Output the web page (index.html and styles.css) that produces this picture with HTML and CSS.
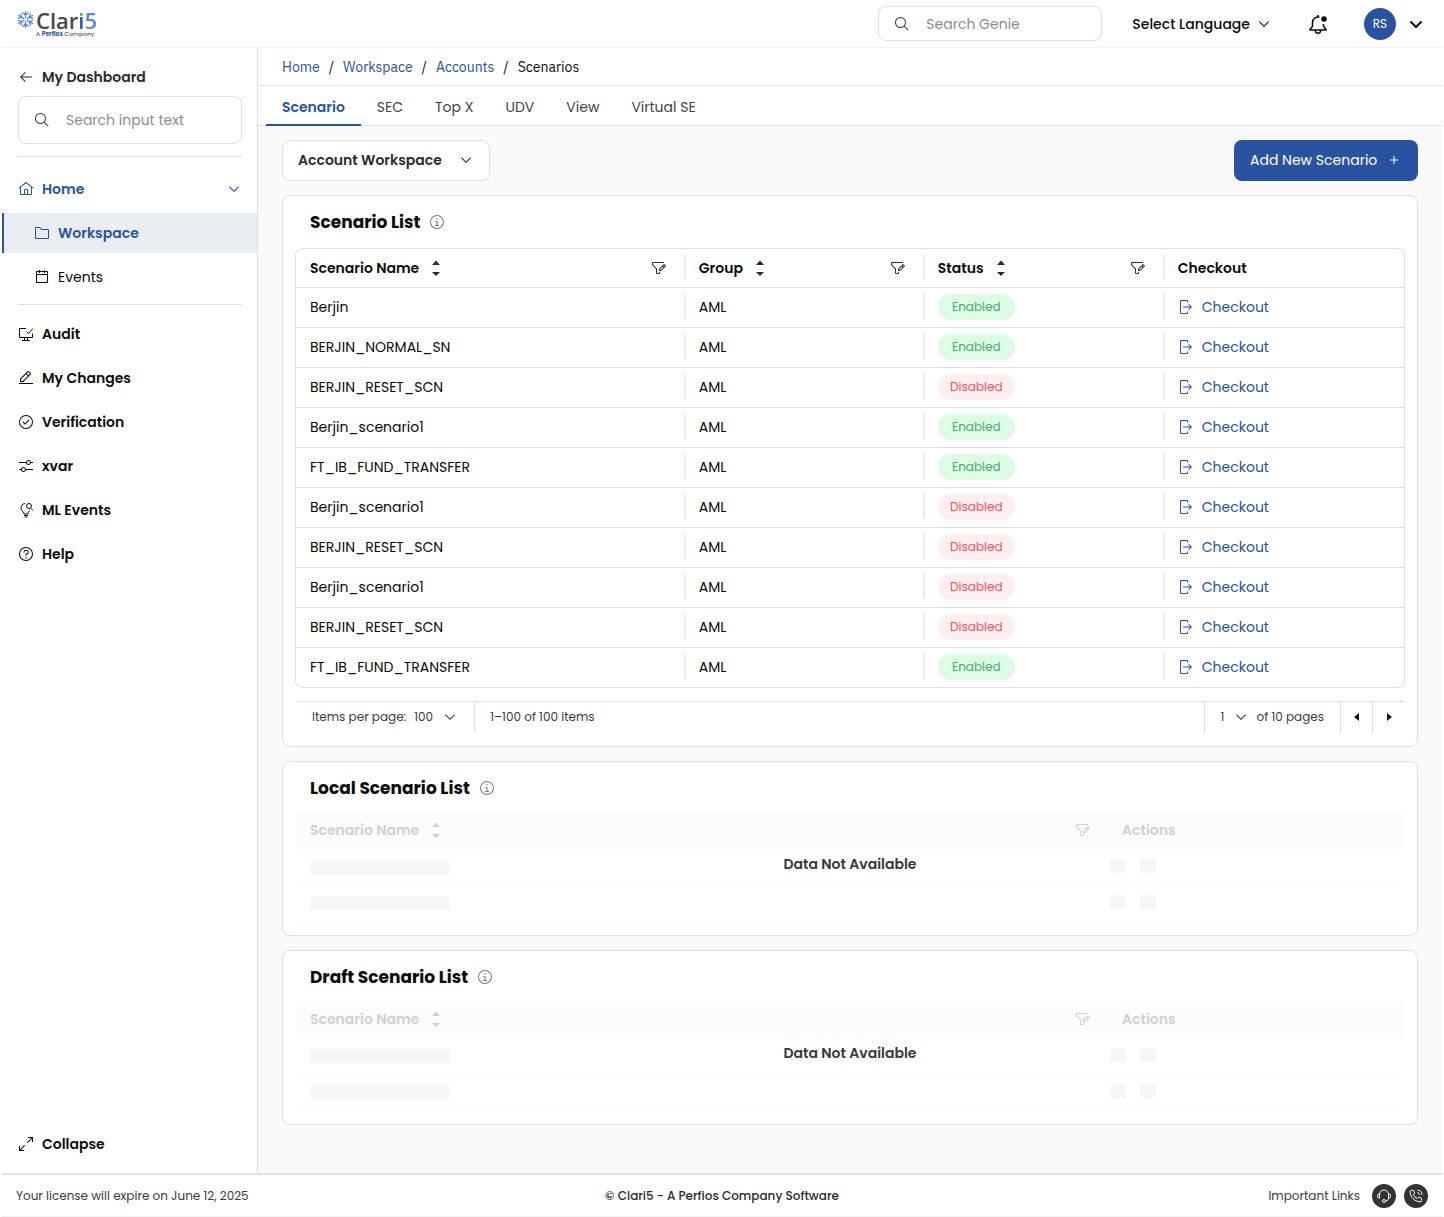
FILE: index.html
```html
<!DOCTYPE html>
<html lang="en">
<head>
<meta charset="utf-8">
<meta name="viewport" content="width=device-width, initial-scale=1">
<title>Clari5 – Scenarios</title>
<link rel="stylesheet" href="styles.css">
</head>
<body>
<svg class="sprite" aria-hidden="true">
  <symbol id="i-back" viewBox="0 0 32 32"><path d="M14 26l1.41-1.41L7.83 17H28v-2H7.83l7.58-7.59L14 6 4 16z"/></symbol>
  <symbol id="i-search" viewBox="0 0 32 32"><path d="M29 27.586l-7.552-7.552a11.018 11.018 0 1 0-1.414 1.414L27.586 29ZM4 13a9 9 0 1 1 9 9 9.01 9.01 0 0 1-9-9Z"/></symbol>
  <symbol id="i-home" viewBox="0 0 32 32"><path d="M16.612 2.214a1.01 1.01 0 0 0-1.242 0L1 13.419l1.243 1.572L4 13.621V26a2.004 2.004 0 0 0 2 2h20a2.004 2.004 0 0 0 2-2V13.63l1.757 1.37L31 13.428ZM18 26h-4v-8h4Zm2 0v-8a2.002 2.002 0 0 0-2-2h-4a2.002 2.002 0 0 0-2 2v8H6V12.062l10-7.79 10 7.8V26Z"/></symbol>
  <symbol id="i-down" viewBox="0 0 32 32"><path d="M16 22 6 12l1.4-1.4 8.6 8.6 8.6-8.6L26 12z"/></symbol>
  <symbol id="i-folder" viewBox="0 0 32 32"><path d="M11.17 6l3.42 3.41.58.59H28v16H4V6h7.17m0-2H4a2 2 0 0 0-2 2v20a2 2 0 0 0 2 2h24a2 2 0 0 0 2-2V10a2 2 0 0 0-2-2H16l-3.41-3.41A2 2 0 0 0 11.17 4z"/></symbol>
  <symbol id="i-calendar" viewBox="0 0 32 32"><path d="M26 4h-4V2h-2v2h-8V2h-2v2H6c-1.1 0-2 .9-2 2v20c0 1.1.9 2 2 2h20c1.1 0 2-.9 2-2V6c0-1.1-.9-2-2-2zm0 22H6V12h20v14zm0-16H6V6h4v2h2V6h8v2h2V6h4v4z"/></symbol>
  <symbol id="i-audit" viewBox="0 0 32 32"><path d="M16 5H3v18h26v-8M13 23v5m6-5v5M8 29h16M17 11l4 4 9-10" fill="none" stroke="currentColor" stroke-width="2"/></symbol>
  <symbol id="i-edit" viewBox="0 0 32 32"><path d="M2 26h28v2H2zM25.4 9c.8-.8.8-2 0-2.8l-3.6-3.6c-.8-.8-2-.8-2.8 0l-15 15V24h6.4L25.4 9zm-5-5L24 7.6l-3 3L17.4 7l3-3zM6 22v-3.6l10-10 3.6 3.6-10 10H6z"/></symbol>
  <symbol id="i-check" viewBox="0 0 32 32"><path d="M14 21.414l-5-5.001L10.413 15 14 18.586 21.585 11 23 12.415zM16 2a14 14 0 1 0 14 14A14 14 0 0 0 16 2Zm0 26a12 12 0 1 1 12-12 12 12 0 0 1-12 12Z"/></symbol>
  <symbol id="i-adjust" viewBox="0 0 32 32"><path d="M30 8h-4.1c-.5-2.3-2.5-4-4.9-4s-4.4 1.7-4.9 4H2v2h14.1c.5 2.3 2.5 4 4.9 4s4.4-1.7 4.9-4H30V8zm-9 4c-1.7 0-3-1.3-3-3s1.3-3 3-3 3 1.3 3 3-1.3 3-3 3zM2 24h4.1c.5 2.3 2.5 4 4.9 4s4.4-1.7 4.9-4H30v-2H15.9c-.5-2.3-2.5-4-4.9-4s-4.4 1.7-4.9 4H2v2zm9-4c1.7 0 3 1.3 3 3s-1.3 3-3 3-3-1.3-3-3 1.3-3 3-3z"/></symbol>
  <symbol id="i-idea" viewBox="0 0 32 32"><path d="M14 3C9 3.500 6 7 6 12c0 6 5.500 6.500 6 12h8c0-4 2-5.500 4-7.500M12 27h8M13.500 30h5M25.500 12.500 30 17" fill="none" stroke="currentColor" stroke-width="2"/><circle cx="22" cy="8" r="5" fill="none" stroke="currentColor" stroke-width="2"/></symbol>
  <symbol id="i-help" viewBox="0 0 32 32"><path d="M16 2a14 14 0 1 0 14 14A14 14 0 0 0 16 2Zm0 26a12 12 0 1 1 12-12 12 12 0 0 1-12 12ZM17 8h-1.500a4.490 4.490 0 0 0-4.500 4.500v.5h2v-.5A2.500 2.500 0 0 1 15.500 10H17a2.500 2.500 0 0 1 0 5h-2v4.500h2V17a4.500 4.500 0 0 0 0-9Z"/><circle cx="16" cy="23.500" r="1.500"/></symbol>
  <symbol id="i-expand" viewBox="0 0 32 32"><path d="M20 2v2h6.586L18 12.582 19.414 14 28 5.414V12h2V2zM14 19.416 12.592 18 4 26.586V20H2v10h10v-2H5.414z"/></symbol>
  <symbol id="i-info" viewBox="0 0 32 32"><path d="M17 22v-8h-4v2h2v6h-3v2h8v-2zM16 8a1.500 1.500 0 1 0 1.500 1.500A1.500 1.500 0 0 0 16 8ZM16 30a14 14 0 1 1 14-14 14 14 0 0 1-14 14Zm0-26a12 12 0 1 0 12 12A12 12 0 0 0 16 4Z"/></symbol>
  <symbol id="i-filter" viewBox="0 0 32 32"><path d="M26 6H4v3.170l7.410 7.410.590.590V26h4v-2h2v2a2 2 0 0 1-2 2h-4a2 2 0 0 1-2-2v-8L2.590 10.590A2 2 0 0 1 2 9.170V6a2 2 0 0 1 2-2h22z"/><path fill-rule="evenodd" d="M29.710 11.290l-3-3a1 1 0 0 0-1.420 0L16 17.590V22h4.410l9.300-9.290a1 1 0 0 0 0-1.420zM19.590 20H18v-1.590l5-5L24.590 15zM26 13.590 24.410 12 26 10.410 27.590 12z"/></symbol>
  <symbol id="i-sort" viewBox="0 0 16 18"><path d="M4 6l4-4.500L12 6zM4 13h8l-4 4z"/></symbol>
  <symbol id="i-checkout" viewBox="0 0 32 32"><path d="M6 30h12a2 2 0 0 0 2-2v-3h-2v3H6V4h12v3h2V4a2 2 0 0 0-2-2H6a2 2 0 0 0-2 2v24a2 2 0 0 0 2 2ZM20.586 20.586 24.172 17H10v-2h14.172l-3.586-3.586L22 10l6 6-6 6z"/></symbol>
  <symbol id="i-add" viewBox="0 0 32 32"><path d="M17 15V8h-2v7H8v2h7v7h2v-7h7v-2z"/></symbol>
  <symbol id="i-left" viewBox="0 0 32 32"><path d="M20 24 10 16 20 8z"/></symbol>
  <symbol id="i-right" viewBox="0 0 32 32"><path d="M12 8l10 8-10 8z"/></symbol>
</svg>

<header class="topbar">
  <a class="logo" href="#" aria-label="Clari5, a Perfios company">
    <svg class="logo-mark" viewBox="0 0 20 20" width="19" height="19" aria-hidden="true">
      <g fill="none" stroke="#5b8bc9" stroke-width="1.400" stroke-linecap="round">
        <path id="arm" d="M10 8V1.500M10 5.500 7.300 2.800M10 5.500l2.700-2.700"/>
        <use href="#arm" transform="rotate(60 10 10)"/><use href="#arm" transform="rotate(120 10 10)"/>
        <use href="#arm" transform="rotate(180 10 10)"/><use href="#arm" transform="rotate(240 10 10)"/>
        <use href="#arm" transform="rotate(300 10 10)"/>
      </g>
    </svg>
    <span class="logo-text">
      <span class="logo-name">Clar<span class="logo-i">i</span><span class="logo-5">5</span></span>
      <span class="logo-tag">A <b>Perfios</b> Company</span>
    </span>
  </a>
  <label class="search search-top">
    <svg class="icon"><use href="#i-search"/></svg>
    <input type="search" placeholder="Search Genie" aria-label="Search Genie">
  </label>
  <button class="language" type="button">Select Language <svg class="icon"><use href="#i-down"/></svg></button>
  <button class="bell" type="button" aria-label="Notifications">
    <svg viewBox="0 0 20 20" width="20" height="20"><path d="M11.500 3.300A5.500 5.500 0 0 0 4.500 8.500v4L2 15.200V16h16v-.8l-2.500-2.700V10M10 1v2M7.300 16.500a2.700 2.700 0 0 0 5.400 0" fill="none" stroke="currentColor" stroke-width="1.500"/><circle cx="16" cy="5" r="2.800"/></svg>
  </button>
  <button class="account" type="button" aria-label="Account menu">
    <span class="avatar">RS</span>
    <svg viewBox="0 0 16 16" width="16" height="16"><path d="M2.500 5.500 8 11l5.500-5.500" fill="none" stroke="currentColor" stroke-width="2"/></svg>
  </button>
</header>

<div class="shell">
  <aside class="sidebar">
    <a class="nav-link back" href="#"><svg class="icon"><use href="#i-back"/></svg>My Dashboard</a>
    <label class="search search-side">
      <svg class="icon"><use href="#i-search"/></svg>
      <input type="search" placeholder="Search input text" aria-label="Search input text">
    </label>
    <nav class="nav" aria-label="Main">
      <a class="nav-link open" href="#"><svg class="icon"><use href="#i-home"/></svg>Home<svg class="icon nav-chevron"><use href="#i-down"/></svg></a>
      <a class="nav-link sub active" href="#"><svg class="icon"><use href="#i-folder"/></svg>Workspace</a>
      <a class="nav-link sub" href="#"><svg class="icon"><use href="#i-calendar"/></svg>Events</a>
      <hr>
      <a class="nav-link" href="#"><svg class="icon"><use href="#i-audit"/></svg>Audit</a>
      <a class="nav-link" href="#"><svg class="icon"><use href="#i-edit"/></svg>My Changes</a>
      <a class="nav-link" href="#"><svg class="icon"><use href="#i-check"/></svg>Verification</a>
      <a class="nav-link" href="#"><svg class="icon"><use href="#i-adjust"/></svg>xvar</a>
      <a class="nav-link" href="#"><svg class="icon"><use href="#i-idea"/></svg>ML Events</a>
      <a class="nav-link" href="#"><svg class="icon"><use href="#i-help"/></svg>Help</a>
    </nav>
    <button class="nav-link collapse" type="button"><svg class="icon"><use href="#i-expand"/></svg>Collapse</button>
  </aside>

  <main class="main">
    <nav class="crumbs" aria-label="Breadcrumb">
      <a href="#">Home</a><span>/</span><a href="#">Workspace</a><span>/</span><a href="#">Accounts</a><span>/</span><span>Scenarios</span>
    </nav>
    <nav class="tabs" aria-label="Sections">
      <a class="tab current" href="#">Scenario</a>
      <a class="tab" href="#">SEC</a>
      <a class="tab" href="#">Top X</a>
      <a class="tab" href="#">UDV</a>
      <a class="tab" href="#">View</a>
      <a class="tab" href="#">Virtual SE</a>
    </nav>

    <div class="content">
      <div class="toolbar">
        <span class="select workspace">
          <select aria-label="Workspace"><option>Account Workspace</option></select>
          <svg class="icon"><use href="#i-down"/></svg>
        </span>
        <button class="primary" type="button">Add New Scenario <svg class="icon"><use href="#i-add"/></svg></button>
      </div>

      <section class="card">
        <h2 class="card-title">Scenario List <svg class="icon"><use href="#i-info"/></svg></h2>
        <div class="table-frame">
          <table class="grid">
            <colgroup><col class="c-name"><col class="c-group"><col class="c-status"><col></colgroup>
            <thead><tr>
              <th><div class="head">Scenario Name <svg class="sort"><use href="#i-sort"/></svg><svg class="icon filter"><use href="#i-filter"/></svg></div></th>
              <th><div class="head">Group <svg class="sort"><use href="#i-sort"/></svg><svg class="icon filter"><use href="#i-filter"/></svg></div></th>
              <th><div class="head">Status <svg class="sort"><use href="#i-sort"/></svg><svg class="icon filter"><use href="#i-filter"/></svg></div></th>
              <th><div class="head">Checkout</div></th>
            </tr></thead>
            <tbody>
              <tr><td>Berjin</td><td>AML</td><td><span class="badge on">Enabled</span></td><td><a class="checkout" href="#"><svg class="icon"><use href="#i-checkout"/></svg>Checkout</a></td></tr>
              <tr><td>BERJIN_NORMAL_SN</td><td>AML</td><td><span class="badge on">Enabled</span></td><td><a class="checkout" href="#"><svg class="icon"><use href="#i-checkout"/></svg>Checkout</a></td></tr>
              <tr><td>BERJIN_RESET_SCN</td><td>AML</td><td><span class="badge off">Disabled</span></td><td><a class="checkout" href="#"><svg class="icon"><use href="#i-checkout"/></svg>Checkout</a></td></tr>
              <tr><td>Berjin_scenario1</td><td>AML</td><td><span class="badge on">Enabled</span></td><td><a class="checkout" href="#"><svg class="icon"><use href="#i-checkout"/></svg>Checkout</a></td></tr>
              <tr><td>FT_IB_FUND_TRANSFER</td><td>AML</td><td><span class="badge on">Enabled</span></td><td><a class="checkout" href="#"><svg class="icon"><use href="#i-checkout"/></svg>Checkout</a></td></tr>
              <tr><td>Berjin_scenario1</td><td>AML</td><td><span class="badge off">Disabled</span></td><td><a class="checkout" href="#"><svg class="icon"><use href="#i-checkout"/></svg>Checkout</a></td></tr>
              <tr><td>BERJIN_RESET_SCN</td><td>AML</td><td><span class="badge off">Disabled</span></td><td><a class="checkout" href="#"><svg class="icon"><use href="#i-checkout"/></svg>Checkout</a></td></tr>
              <tr><td>Berjin_scenario1</td><td>AML</td><td><span class="badge off">Disabled</span></td><td><a class="checkout" href="#"><svg class="icon"><use href="#i-checkout"/></svg>Checkout</a></td></tr>
              <tr><td>BERJIN_RESET_SCN</td><td>AML</td><td><span class="badge off">Disabled</span></td><td><a class="checkout" href="#"><svg class="icon"><use href="#i-checkout"/></svg>Checkout</a></td></tr>
              <tr><td>FT_IB_FUND_TRANSFER</td><td>AML</td><td><span class="badge on">Enabled</span></td><td><a class="checkout" href="#"><svg class="icon"><use href="#i-checkout"/></svg>Checkout</a></td></tr>
            </tbody>
          </table>
        </div>
        <div class="pager">
          <div class="pager-cell">
            <label for="per-page">Items per page:</label>
            <span class="select per-page"><select id="per-page"><option>100</option></select><svg class="icon"><use href="#i-down"/></svg></span>
          </div>
          <div class="pager-cell pager-range">1–100 of 100 items</div>
          <div class="pager-cell">
            <span class="select page-no"><select id="page-no" aria-label="Page"><option>1</option></select><svg class="icon"><use href="#i-down"/></svg></span>
            <label for="page-no">of 10 pages</label>
          </div>
          <button class="pager-btn" type="button" aria-label="Previous page"><svg class="icon"><use href="#i-left"/></svg></button>
          <button class="pager-btn" type="button" aria-label="Next page"><svg class="icon"><use href="#i-right"/></svg></button>
        </div>
      </section>

      <section class="card">
        <h2 class="card-title">Local Scenario List <svg class="icon"><use href="#i-info"/></svg></h2>
        <div class="empty">
          <table class="ghost">
            <colgroup><col><col class="c-actions"></colgroup>
            <thead><tr>
              <th><div class="head">Scenario Name <svg class="sort"><use href="#i-sort"/></svg><svg class="icon filter"><use href="#i-filter"/></svg></div></th>
              <th><div class="head">Actions</div></th>
            </tr></thead>
            <tbody>
              <tr><td><span class="bar"></span></td><td><span class="dot"></span><span class="dot"></span></td></tr>
              <tr><td><span class="bar"></span></td><td><span class="dot"></span><span class="dot"></span></td></tr>
            </tbody>
          </table>
          <p class="empty-note">Data Not Available</p>
        </div>
      </section>

      <section class="card">
        <h2 class="card-title">Draft Scenario List <svg class="icon"><use href="#i-info"/></svg></h2>
        <div class="empty">
          <table class="ghost">
            <colgroup><col><col class="c-actions"></colgroup>
            <thead><tr>
              <th><div class="head">Scenario Name <svg class="sort"><use href="#i-sort"/></svg><svg class="icon filter"><use href="#i-filter"/></svg></div></th>
              <th><div class="head">Actions</div></th>
            </tr></thead>
            <tbody>
              <tr><td><span class="bar"></span></td><td><span class="dot"></span><span class="dot"></span></td></tr>
              <tr><td><span class="bar"></span></td><td><span class="dot"></span><span class="dot"></span></td></tr>
            </tbody>
          </table>
          <p class="empty-note">Data Not Available</p>
        </div>
      </section>
    </div>
  </main>
</div>

<footer class="footer">
  <span>Your license will expire on June 12, 2025</span>
  <strong>© Clari5 - A Perfios Company Software</strong>
  <div class="links">
    <span>Important Links</span>
    <a class="round" href="#" aria-label="Support"><svg viewBox="0 0 16 16" width="16" height="16"><path d="M3.500 6.500a4.500 4.500 0 0 1 9 0M3.500 6v4H3a1.500 1.500 0 0 1-1.500-1.500v-1A1.500 1.500 0 0 1 3 6zM12.500 6v4h.5a1.500 1.500 0 0 0 1.500-1.500v-1A1.500 1.500 0 0 0 13 6zM12.500 10c0 2-1 3-3 3"/><circle cx="8" cy="13" r="1.500"/></svg></a>
    <a class="round" href="#" aria-label="Call"><svg viewBox="0 0 16 16" width="16" height="16"><path d="M13.500 10.700v1.800a1.300 1.300 0 0 1-1.400 1.300C6.500 13.400 2.500 9.300 2.100 3.800A1.300 1.300 0 0 1 3.400 2.400h2.200l1.200 2.900-1.500 1.400a8 8 0 0 0 3.800 3.800l1.500-1.500 2.900 1.200zM9.500 4.500a2.300 2.300 0 0 1 2 2.300M9.500 2.200a4.700 4.700 0 0 1 4.500 4.600"/></svg></a>
  </div>
</footer>
</body>
</html>
```
FILE: styles.css
```css
:root {
  --blue: #2953a0;
  --line: #dedfe1;
  --soft-line: #e9ecf1;
  --ink: #2b2b2b;
}

* { box-sizing: border-box; }

body {
  margin: 0;
  padding: 0 2px;
  min-height: 100vh;
  display: flex;
  flex-direction: column;
  background: #fff;
  color: #0b0b0c;
  font: 400 14px/20px Poppins, Inter, "Noto Sans", sans-serif;
}

a { color: inherit; text-decoration: none; }

button, input, select {
  font: inherit;
  color: inherit;
  background: none;
  border: 0;
  margin: 0;
  padding: 0;
}

button, select { cursor: pointer; }

svg { fill: currentColor; flex: none; display: block; }

.sprite { position: absolute; width: 0; height: 0; }
.icon { width: 16px; height: 16px; }

/* Top bar */
.topbar {
  display: flex;
  align-items: center;
  height: 48px;
  padding: 0 18px 0 14px;
  border-bottom: 1px solid #f3f3f4;
}

.logo { display: flex; gap: 1px; margin-right: auto; }
.logo-text { display: flex; flex-direction: column; }
.logo-name {
  font: 600 22px/20px "Open Sans", sans-serif;
  color: #47484c;
}
.logo-i {
  color: transparent;
  background: linear-gradient(#3fae55 40%, var(--blue) 40%);
  background-clip: text;
}
.logo-5 { color: #5b8bc9; }
.logo-tag { font-size: 6px; line-height: 8px; color: #333; white-space: nowrap; }
.logo-tag b { color: var(--blue); }

.search {
  display: flex;
  align-items: center;
  gap: 16px;
  padding: 0 15px;
  border: 1px solid var(--line);
  border-radius: 8px;
  color: #3b3b3d;
}
.search input { flex: 1; min-width: 0; outline: 0; }
.search input::placeholder { color: #8d8d8f; opacity: 1; }
.search-top { width: 224px; height: 35px; margin-right: 30px; }

.language { display: flex; align-items: center; gap: 6px; font-weight: 500; white-space: nowrap; }
.bell { margin: 0 36px; }
.account { display: flex; align-items: center; gap: 12px; }
.avatar {
  width: 32px;
  height: 32px;
  border-radius: 50%;
  background: var(--blue);
  color: #fff;
  font-size: 12px;
  line-height: 32px;
  text-align: center;
}

/* Frame */
.shell { flex: 1; display: flex; }

.sidebar {
  width: 256px;
  flex: none;
  display: flex;
  flex-direction: column;
  padding: 9px 0;
  border-right: 1px solid var(--line);
}

.nav { display: flex; flex-direction: column; gap: 4px; margin-top: 12px; }
.nav::before, .nav hr {
  content: "";
  height: 1px;
  margin: 0 15px 8px 16px;
  border: 0;
  background: var(--line);
}
.nav hr { margin-top: 3px; margin-bottom: 5px; }

.nav-link {
  display: flex;
  align-items: center;
  gap: 8px;
  height: 40px;
  padding: 0 15px 0 16px;
  font-weight: 600;
}
.nav-link.back { color: var(--ink); height: 39px; }
.nav-link.open { color: var(--blue); }
.nav-link.sub { padding-left: 32px; font-weight: 400; }
.nav-link.active {
  padding-left: 30px;
  border-left: 2px solid var(--blue);
  background: #eaedf2;
  color: var(--blue);
  font-weight: 600;
}
.nav-chevron { margin-left: auto; }
.collapse { margin-top: auto; }
.search-side { height: 48px; margin: 0 15px 0 16px; }

.main { flex: 1; min-width: 0; display: flex; flex-direction: column; background: #fafafa; }

.crumbs {
  display: flex;
  align-items: center;
  gap: 9px;
  height: 38px;
  padding: 0 24px;
  background: #fff;
  border-bottom: 1px solid var(--line);
  font-family: "IBM Plex Sans", "Open Sans", sans-serif;
}
.crumbs a { color: var(--blue); }

.tabs {
  display: flex;
  height: 40px;
  padding: 0 8px;
  background: #fff;
  border-bottom: 1px solid var(--line);
}
.tab { padding: 0 16px; line-height: 42px; color: #444; }
.current { color: var(--blue); font-weight: 600; box-shadow: 0 1px var(--blue), inset 0 -1px var(--blue); }

.content { display: flex; flex-direction: column; gap: 14px; padding: 14px 24px 48px; }
.toolbar { display: flex; justify-content: space-between; height: 41px; }

/* A select with its chevron laid over the right end */
.select { display: grid; align-items: center; }
.select > * { grid-area: 1 / 1; }
.select select { appearance: none; width: 100%; height: 100%; }
.select .icon { justify-self: end; pointer-events: none; }

.workspace {
  width: 208px;
  padding-bottom: 1px;
  background: #fff;
  border: 1px solid var(--line);
  border-radius: 8px;
  color: var(--ink);
  font-weight: 600;
}
.workspace select { padding-left: 15px; }
.workspace .icon { margin-right: 15px; }

.primary {
  display: flex;
  align-items: center;
  justify-content: space-between;
  width: 184px;
  padding: 0 16px 1px;
  border-radius: 8px;
  background: var(--blue);
  color: #fff;
}

.card {
  padding: 0 12px 13px;
  background: #fff;
  border: 1px solid var(--line);
  border-radius: 8px;
}
.card-title {
  display: flex;
  align-items: center;
  gap: 9px;
  height: 52px;
  margin: 0;
  padding-left: 15px;
  font-size: 17px;
  font-weight: 700;
}
.card-title .icon { color: #77787b; }

/* Tables */
table { width: 100%; table-layout: fixed; border-collapse: separate; border-spacing: 0; }
th, td { padding: 0 14px; text-align: left; }
td { padding-bottom: 2px; }
th { font-weight: 600; }

.head { display: flex; align-items: center; }
.sort { width: 16px; height: 18px; margin-left: 9px; color: var(--ink); }
.filter { margin-left: auto; margin-right: 3px; color: var(--ink); }

.table-frame { border: 1px solid var(--line); border-radius: 8px; overflow: hidden; }
.c-name { width: 35%; }
.c-group { width: 239px; }
.c-status { width: 240px; }
.grid tr > * { height: 40px; border-bottom: 1px solid var(--line); }
.grid th { height: 39px; }
.grid tbody tr:last-child td { height: 39px; border-bottom: 0; }
.grid tr > * + * {
  background: linear-gradient(var(--soft-line), var(--soft-line)) 0 6px / 2px 25px no-repeat;
  padding-left: 15px;
}

.badge {
  display: block;
  width: 77px;
  border-radius: 13px;
  font-size: 12px;
  line-height: 26px;
  text-align: center;
}
.on { background: #dcfce5; color: #46ac68; }
.off { background: #ffeff0; color: #f4545e; }

.checkout { display: flex; align-items: center; gap: 8px; color: var(--blue); }

.pager {
  display: flex;
  margin: 13px 1px 0;
  border-top: 1px solid var(--line);
  height: 32px;
  font-size: 12px;
  color: #3b3b3d;
}
.pager-cell { display: flex; align-items: center; gap: 8px; padding: 0 16px 2px; border-right: 1px solid var(--line); }
.pager-range { flex: 1; padding: 0 15px 2px; }
.per-page { width: 44px; }
.page-no { width: 28px; }
.pager-btn { width: 31px; display: grid; place-items: center; padding-bottom: 2px; color: #161616; }
.pager-btn + .pager-btn { width: 32px; border-left: 1px solid var(--line); }

/* Placeholder tables */
.empty { position: relative; margin: -1px 1px 1px; }
.ghost tr > * { height: 36px; border-bottom: 1px solid #fcfcfc; }
.ghost th { padding-bottom: 2px; }
.ghost thead { background: #fcfcfc; color: #cfd0d4; }
.ghost .sort, .ghost .filter { color: #cfd0d4; }
.c-actions { width: 296px; }
.ghost td:last-child { padding-left: 2px; font-size: 0; }
.bar, .dot { display: inline-block; vertical-align: middle; height: 14px; border-radius: 3px; background: #f6f6f6; }
.bar { width: 140px; }
.dot { width: 16px; margin-right: 14px; }
.empty-note {
  position: absolute;
  inset: 41px 0 auto;
  margin: 0;
  text-align: center;
  font-weight: 600;
  color: #38383a;
}

/* Footer */
.footer {
  display: grid;
  grid-template-columns: 1fr auto 1fr;
  align-items: center;
  height: 44px;
  padding: 0 14px;
  border-top: 2px solid #e2e4e8;
  border-bottom: 1px solid #f3f3f4;
  font-size: 12px;
  color: #3b3b3d;
}
.footer strong { font-weight: 500; color: var(--ink); }
.links { display: flex; align-items: center; justify-content: flex-end; gap: 8px; }
.links span { margin-right: 4px; }
.round {
  display: grid;
  place-items: center;
  width: 24px;
  height: 24px;
  border-radius: 50%;
  background: #333;
}
.round svg { fill: none; stroke: #fff; }
```
